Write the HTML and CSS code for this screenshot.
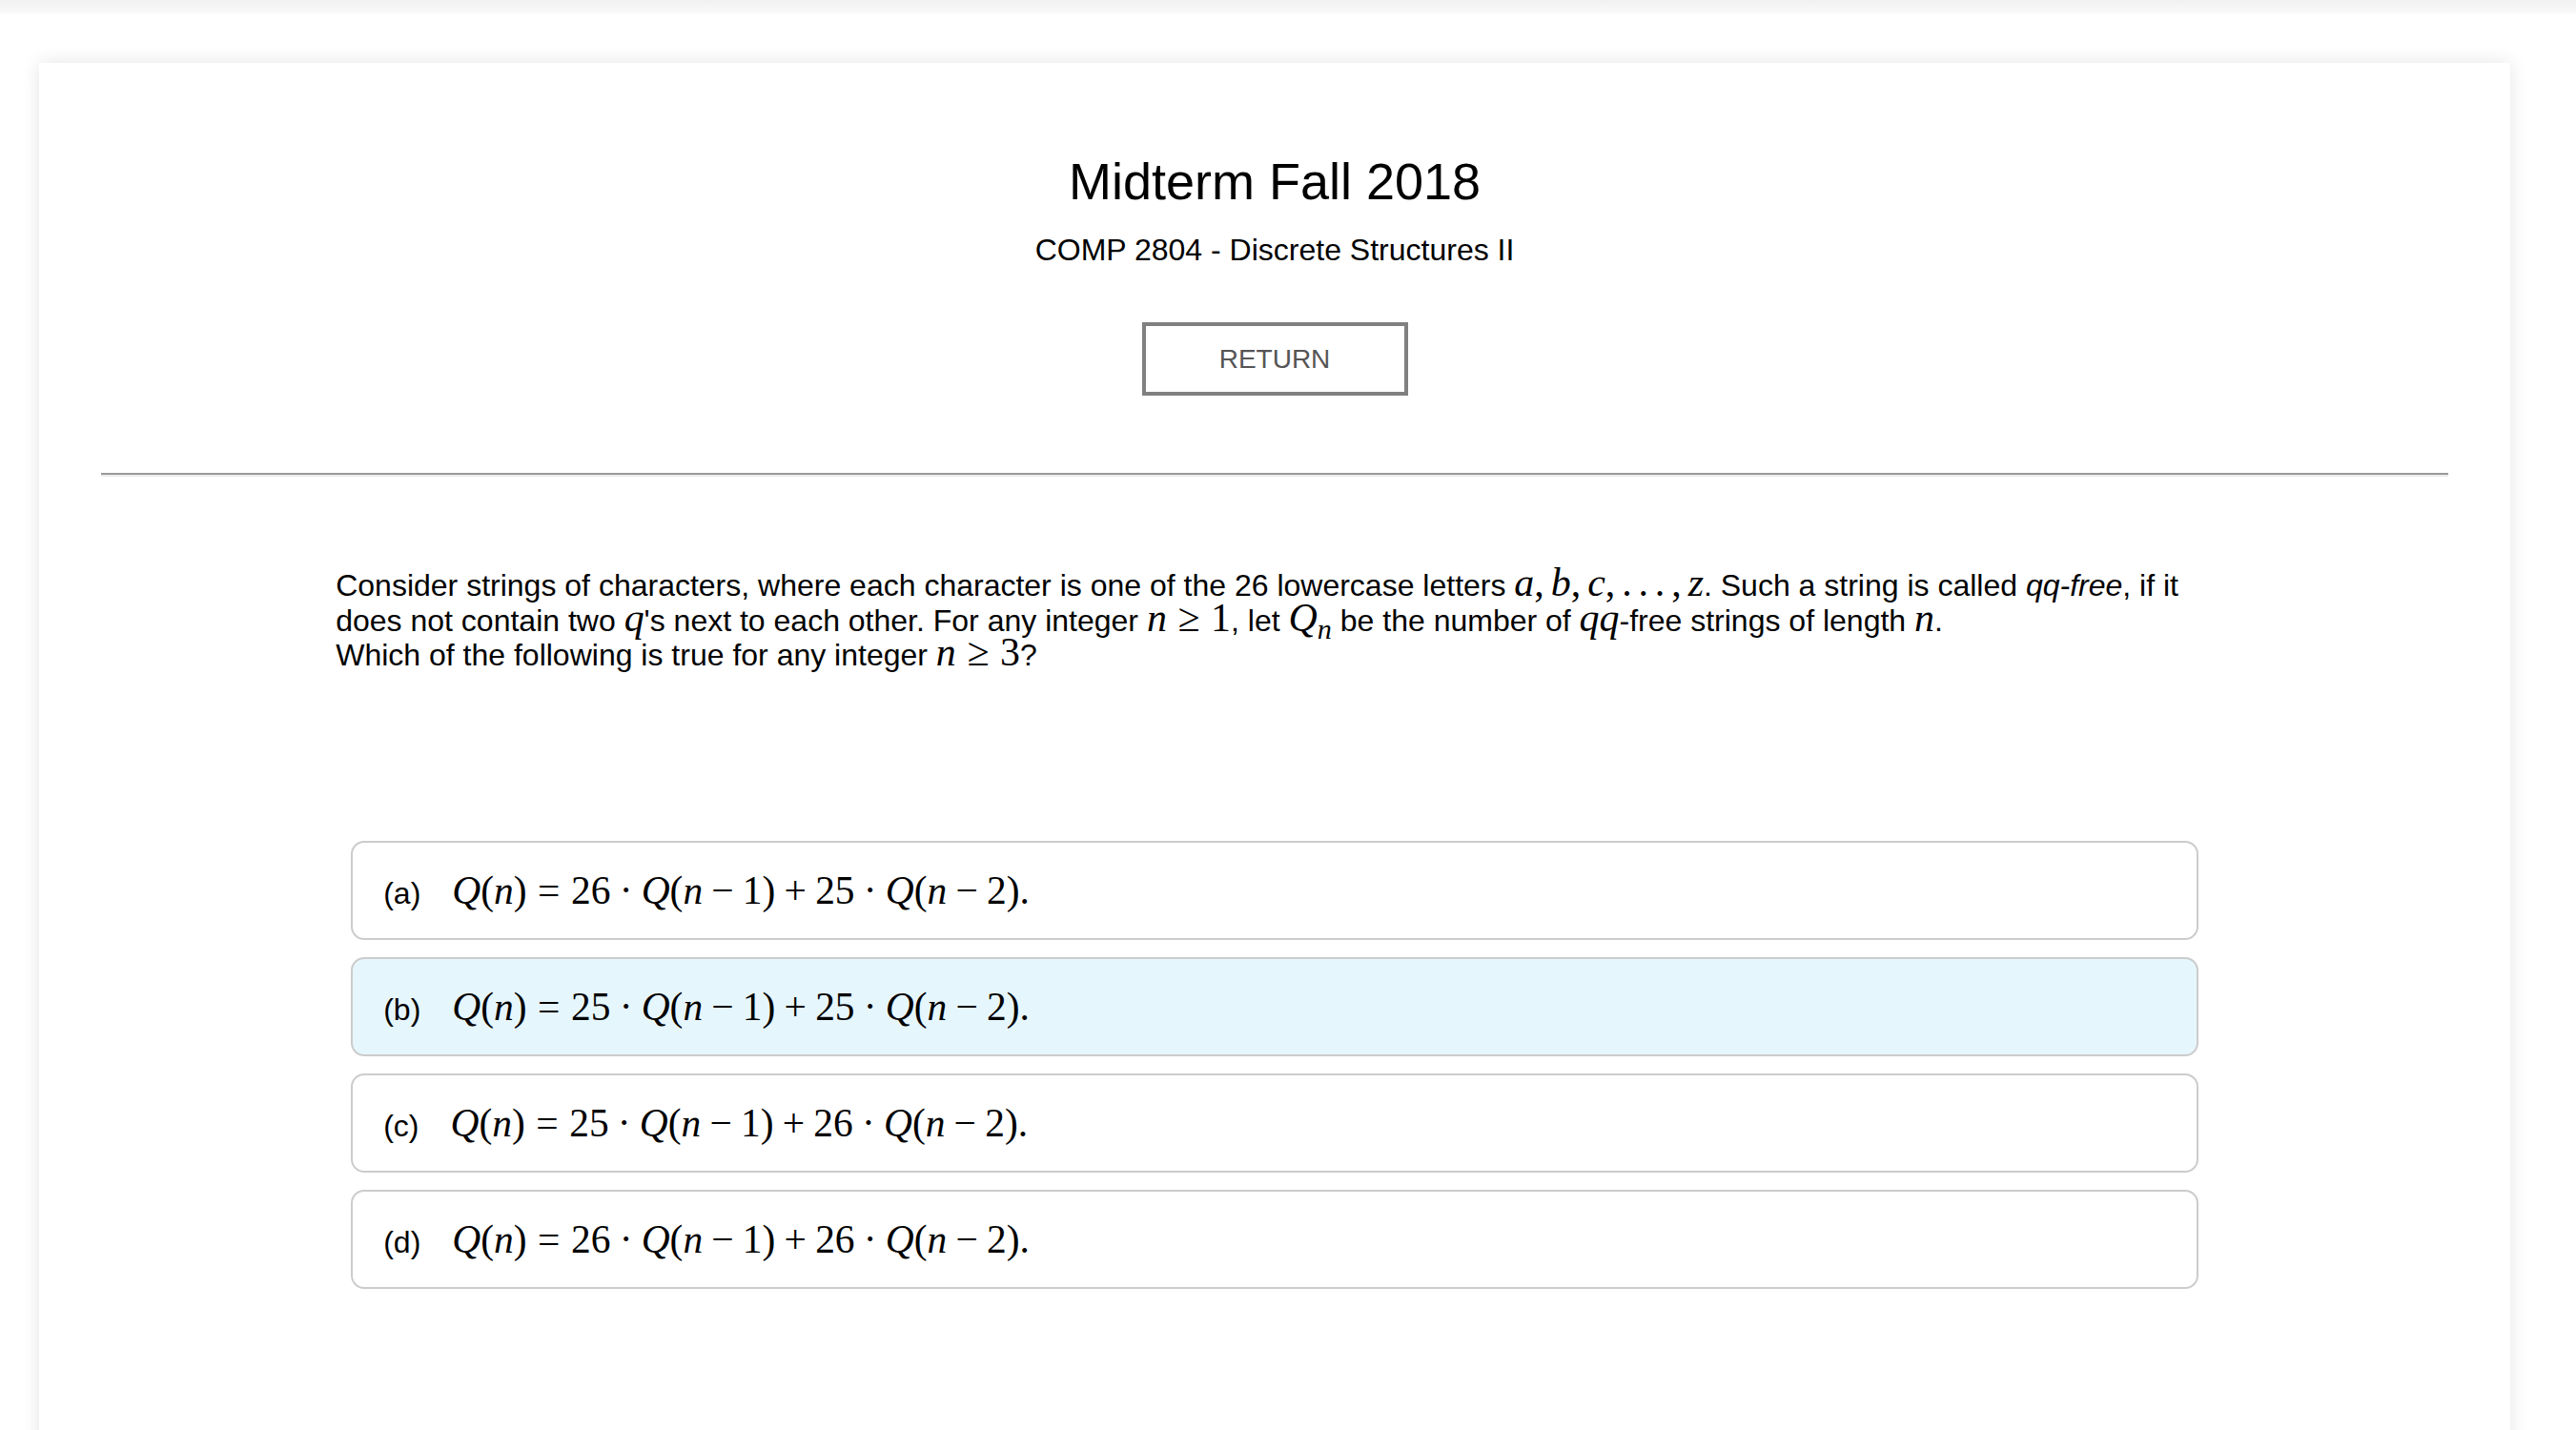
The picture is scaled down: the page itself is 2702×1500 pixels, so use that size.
FILE: index.html
```html
<!DOCTYPE html>
<html lang="en">
<head>
<meta charset="utf-8">
<title>Midterm Fall 2018</title>
<link rel="stylesheet" href="styles.css">
</head>
<body>
<div class="topbar"></div>
<main class="page">
  <section class="card">
    <header class="head">
      <h1 class="title">Midterm Fall 2018</h1>
      <p class="subtitle">COMP 2804 - Discrete Structures II</p>
      <button class="return-btn" type="button">RETURN</button>
    </header>
    <hr class="divider">
    <div class="question">
      <p class="prompt">Consider strings of characters, where each character is one of the 26 lowercase letters <span class="m"><i>a</i>,<span class="th"></span><i>b</i>,<span class="th"></span><i>c</i>,<span class="th"></span>.<span class="dots"></span>.<span class="dots"></span>.<span class="th"></span>,<span class="th"></span><i>z</i></span>. Such a string is called <em>qq-free</em>, if it does not contain two <span class="m"><i>q</i></span>'s next to each other. For any integer <span class="m"><i>n</i><span class="rel">≥</span>1</span>, let <span class="m"><i>Q</i><sub><i>n</i></sub></span> be the number of <span class="m"><i>qq</i></span>-free strings of length <span class="m"><i>n</i></span>.<br>Which of the following is true for any integer <span class="m"><i>n</i><span class="rel">≥</span>3</span>?</p>
      <div class="options">
        <div class="opt"><span class="lbl">(a)</span><span class="m"><i>Q</i>(<i>n</i>)<span class="rel">=</span>26<span class="bin">·</span><i>Q</i>(<i>n</i><span class="bin">−</span>1)<span class="bin">+</span>25<span class="bin">·</span><i>Q</i>(<i>n</i><span class="bin">−</span>2).</span></div>
        <div class="opt opt-active"><span class="lbl">(b)</span><span class="m"><i>Q</i>(<i>n</i>)<span class="rel">=</span>25<span class="bin">·</span><i>Q</i>(<i>n</i><span class="bin">−</span>1)<span class="bin">+</span>25<span class="bin">·</span><i>Q</i>(<i>n</i><span class="bin">−</span>2).</span></div>
        <div class="opt"><span class="lbl">(c)</span><span class="m"><i>Q</i>(<i>n</i>)<span class="rel">=</span>25<span class="bin">·</span><i>Q</i>(<i>n</i><span class="bin">−</span>1)<span class="bin">+</span>26<span class="bin">·</span><i>Q</i>(<i>n</i><span class="bin">−</span>2).</span></div>
        <div class="opt"><span class="lbl">(d)</span><span class="m"><i>Q</i>(<i>n</i>)<span class="rel">=</span>26<span class="bin">·</span><i>Q</i>(<i>n</i><span class="bin">−</span>1)<span class="bin">+</span>26<span class="bin">·</span><i>Q</i>(<i>n</i><span class="bin">−</span>2).</span></div>
      </div>
    </div>
  </section>
</main>
</body>
</html>
```

FILE: styles.css
```css
html, body {
  margin: 0;
  padding: 0;
  background: #ffffff;
  overflow: hidden;
}

body {
  font-family: "Liberation Sans", Arial, sans-serif;
  color: #000;
}

.topbar {
  height: 14px;
  background: linear-gradient(to bottom, #f1f1f1, #fafafa);
}

.page {
  padding: 52px 69px 0 41px;
}

.card {
  background: #fff;
  box-shadow: 0 0 18px rgba(0, 0, 0, 0.11);
  padding: 93px 65px 0;
  min-height: 1600px;
  box-sizing: border-box;
}

.head {
  display: flex;
  flex-direction: column;
  align-items: center;
}

.title {
  margin: 0;
  font-size: 54px;
  line-height: 62px;
  font-weight: 400;
}

.subtitle {
  margin: 23px 0 0;
  font-size: 32px;
  line-height: 37px;
}

.return-btn {
  margin-top: 57px;
  width: 279px;
  height: 77px;
  box-sizing: border-box;
  border: 4px solid #808080;
  background: #fff;
  color: #555;
  font-family: "Liberation Sans", Arial, sans-serif;
  font-size: 28px;
  padding: 0;
}

.divider {
  margin: 81px 0 0;
  height: 0;
  border: 0;
  border-top: 2px solid #9a9a9a;
  border-bottom: 2px solid #ececec;
}

.question {
  width: 80%;
  margin: 0 auto;
}

.prompt {
  margin: 96px 0 0;
  font-size: 32px;
  line-height: 36.5px;
}

.prompt em {
  font-style: italic;
}

.m {
  font-family: "Liberation Serif", "Times New Roman", serif;
  font-size: 1.31em;
  line-height: 0;
  white-space: nowrap;
}

.m i {
  font-style: italic;
}

.m sub {
  font-size: 0.72em;
  vertical-align: -0.25em;
  line-height: 0;
}

.th {
  display: inline-block;
  width: 0.167em;
}

.dots {
  display: inline-block;
  width: 0.16em;
}

.rel {
  margin: 0 0.278em;
}

.bin {
  margin: 0 0.222em;
}

.options {
  margin: 176px 16px 0;
  display: flex;
  flex-direction: column;
  gap: 18px;
}

.opt {
  height: 104px;
  box-sizing: border-box;
  border: 2px solid #cccccc;
  border-radius: 14px;
  background: #fff;
  padding: 6px 32px 0;
  font-size: 32px;
  line-height: 94px;
  white-space: nowrap;
}

.opt .m {
  font-size: 1.295em;
}

.opt-active {
  background: #e6f6fd;
}

.lbl {
  margin-right: 33px;
}
```
